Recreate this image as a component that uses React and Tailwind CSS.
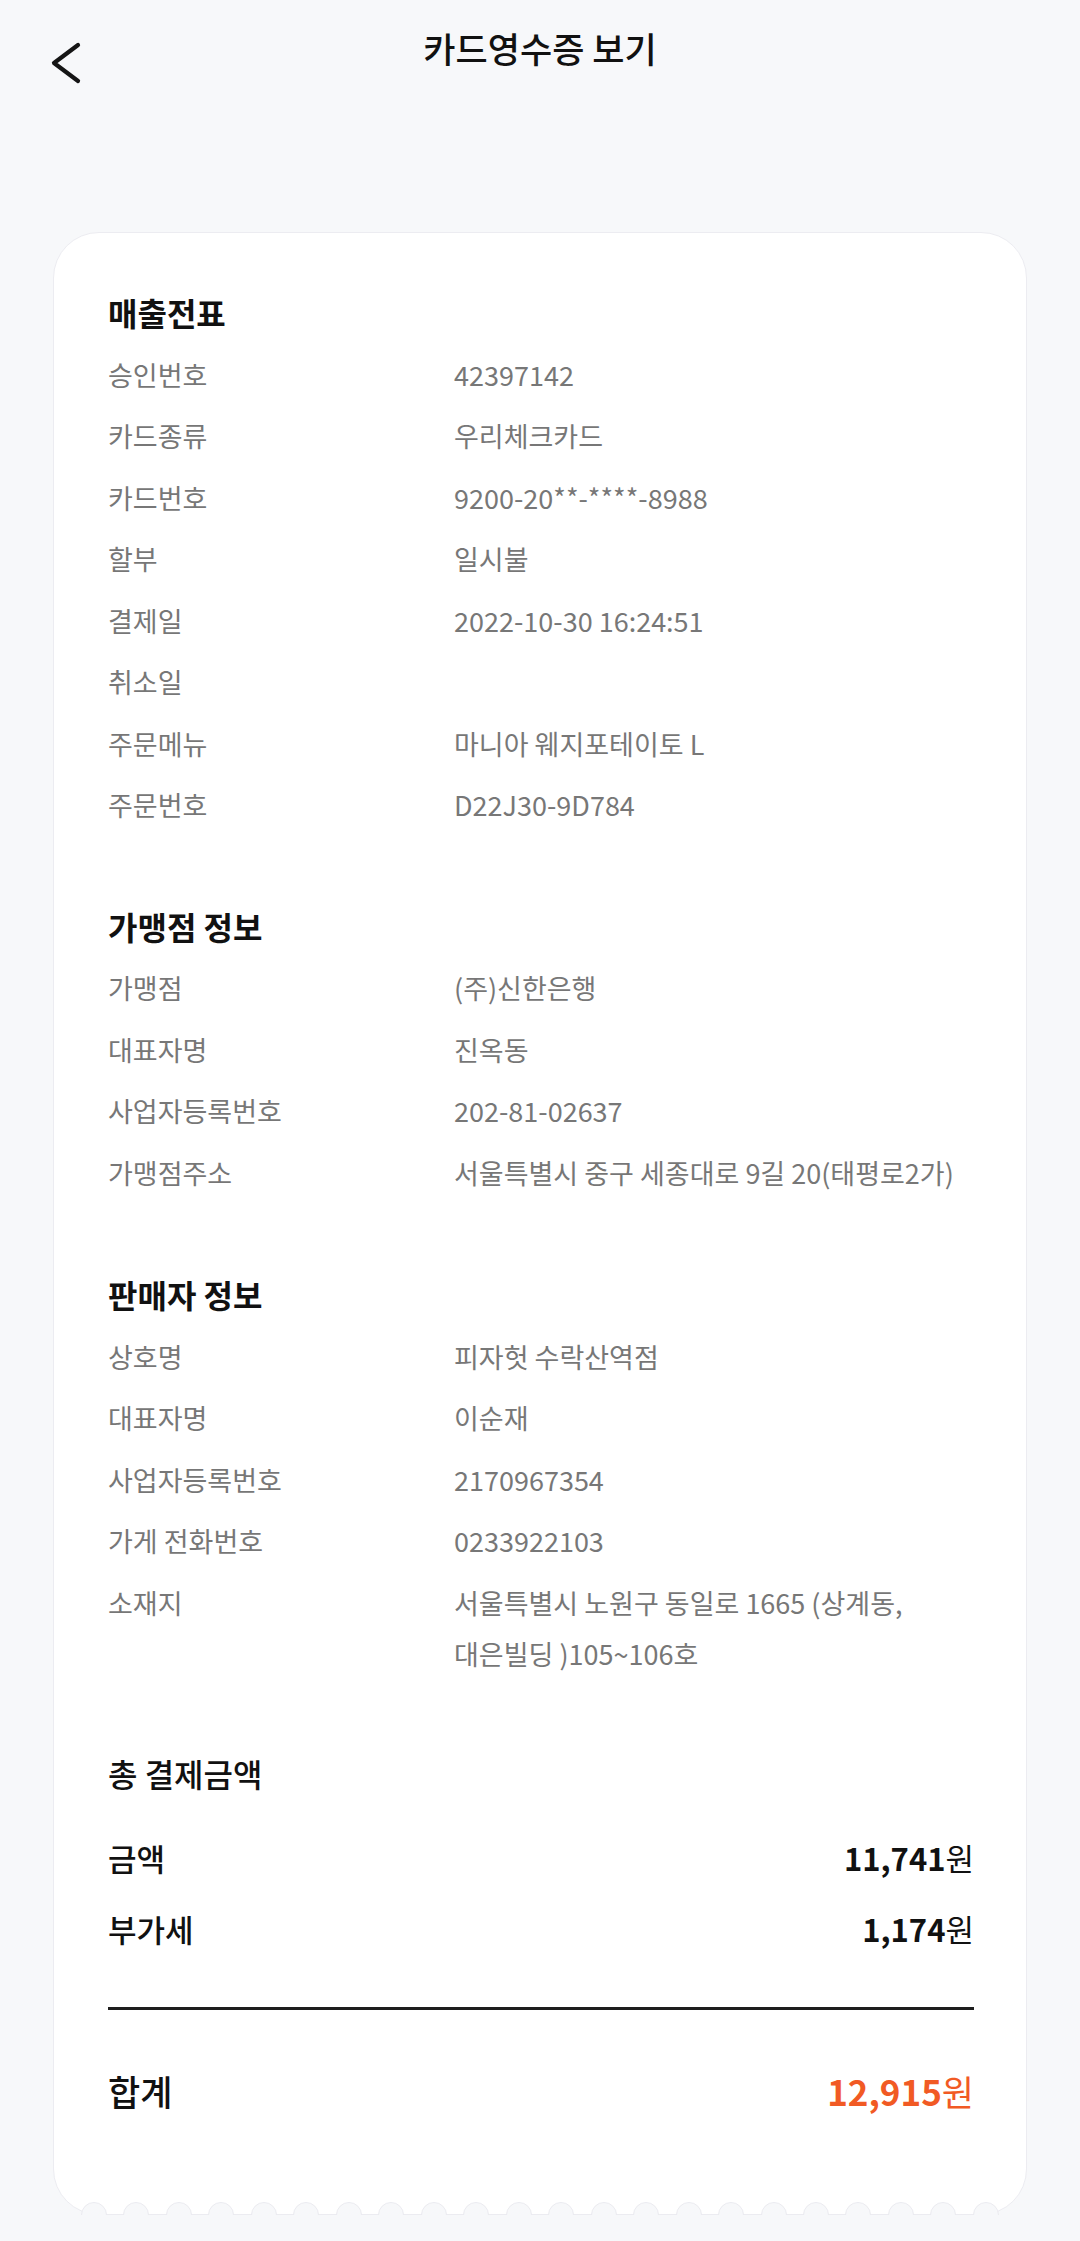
import React from 'react';

const FONT = { fontFamily: '"Noto Sans CJK KR", "Noto Sans", sans-serif' };

const salesRows = [
  ['승인번호', '42397142'],
  ['카드종류', '우리체크카드'],
  ['카드번호', '9200-20**-****-8988'],
  ['할부', '일시불'],
  ['결제일', '2022-10-30 16:24:51'],
  ['취소일', ''],
  ['주문메뉴', '마니아 웨지포테이토 L'],
  ['주문번호', 'D22J30-9D784'],
];

const merchantRows = [
  ['가맹점', '(주)신한은행'],
  ['대표자명', '진옥동'],
  ['사업자등록번호', '202-81-02637'],
  ['가맹점주소', '서울특별시 중구 세종대로 9길 20(태평로2가)'],
];

const sellerRows = [
  ['상호명', '피자헛 수락산역점'],
  ['대표자명', '이순재'],
  ['사업자등록번호', '2170967354'],
  ['가게 전화번호', '0233922103'],
];

const SectionTitle = ({ children, className = '' }) => (
  <div className={`py-[5px] text-[32px] leading-[51.5px] font-bold text-[#111] ${className}`}>
    {children}
  </div>
);

const InfoRow = ({ label, value }) => (
  <div className="grid grid-cols-[346px_1fr] py-[5px] text-[27px] leading-[51.5px] text-[#777]">
    <div className="whitespace-nowrap">{label}</div>
    <div className="whitespace-nowrap">{value}</div>
  </div>
);

const AmountRow = ({ label, amount }) => (
  <div className="flex h-[71px] items-center justify-between text-[31px] text-[#111]">
    <span className="font-medium">{label}</span>
    <span className="font-bold">
      {amount}
      <span className="font-normal">원</span>
    </span>
  </div>
);

const Scallops = () => (
  <div className="absolute bottom-[-1px] left-0 right-0 flex h-[13px] justify-between overflow-hidden px-[27px]">
    {Array.from({ length: 22 }).map((_, i) => (
      <div
        key={i}
        className="h-[26px] w-[26px] shrink-0 rounded-full border border-[#ebebf0] bg-[#f7f8fa]"
      />
    ))}
  </div>
);

export default function App() {
  return (
    <div className="min-h-screen w-full bg-[#f7f8fa] pb-[28px]" style={FONT}>
      {/* Header */}
      <div className="grid h-[232px] grid-cols-[1fr_auto_1fr] items-start pt-[28px]">
        <div className="pl-[50px] pt-[13px]">
          <svg width="34" height="44" viewBox="0 0 34 44" fill="none">
            <polyline
              points="28,4 4,22 28,40"
              stroke="#151515"
              strokeWidth="4.2"
              strokeLinecap="round"
              strokeLinejoin="round"
              fill="none"
            />
          </svg>
        </div>
        <h1 className="text-[35px] leading-[40px] font-medium text-[#111]">
          카드영수증 보기
        </h1>
        <div />
      </div>

      {/* Receipt card */}
      <div className="relative mx-[53px] rounded-[46px] border border-[#ececf1] bg-white pb-[88px] pl-[54px] pr-[52px] pt-[49px]">
        <SectionTitle>매출전표</SectionTitle>
        {salesRows.map(([l, v]) => (
          <InfoRow key={l} label={l} value={v} />
        ))}

        <SectionTitle className="mt-[60px]">가맹점 정보</SectionTitle>
        {merchantRows.map(([l, v]) => (
          <InfoRow key={l} label={l} value={v} />
        ))}

        <SectionTitle className="mt-[61px]">판매자 정보</SectionTitle>
        {sellerRows.map(([l, v]) => (
          <InfoRow key={l} label={l} value={v} />
        ))}
        <div className="grid grid-cols-[346px_1fr] py-[5px] text-[27px] leading-[51.5px] text-[#777]">
          <div>소재지</div>
          <div className="whitespace-nowrap">
            서울특별시 노원구 동일로 1665 (상계동,
            <br />
            대은빌딩 )105~106호
          </div>
        </div>

        {/* Total */}
        <div className="mt-[58px] py-[5px] text-[32px] leading-[51.5px] font-medium text-[#111]">
          총 결제금액
        </div>
        <div className="mt-[19px]">
          <AmountRow label="금액" amount="11,741" />
          <AmountRow label="부가세" amount="1,174" />
        </div>
        <div className="mt-[42px] h-[3px] bg-[#1e1e1e]" />
        <div className="mt-[46px] flex h-[70px] items-center justify-between text-[35px]">
          <span className="font-medium text-[#111]">합계</span>
          <span className="font-bold text-[#f15a24]">
            12,915<span className="font-normal">원</span>
          </span>
        </div>

        <Scallops />
      </div>
    </div>
  );
}
